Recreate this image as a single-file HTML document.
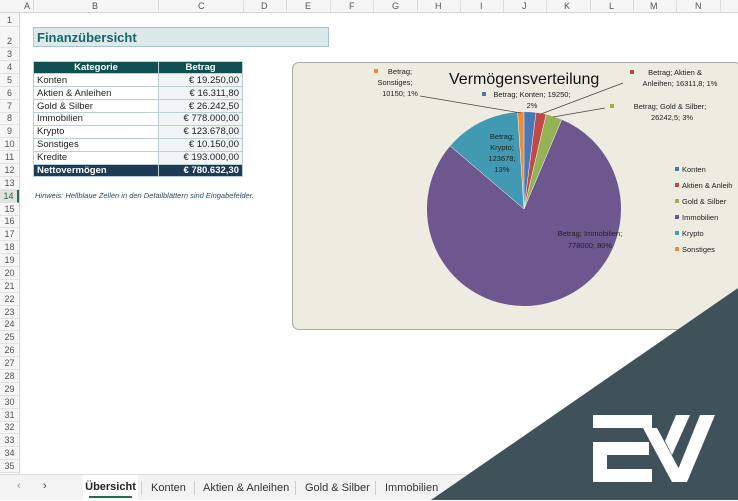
<!DOCTYPE html>
<html><head><meta charset="utf-8"><style>
*{margin:0;padding:0;box-sizing:border-box}
body{width:738px;height:500px;overflow:hidden;background:#fff;font-family:"Liberation Sans",sans-serif;position:relative}
.a{position:absolute}
#colh{left:0;top:0;width:738px;height:13px;background:#f6f6f6;border-bottom:1px solid #d4d4d4;font-size:9px;color:#555}
#colh span{position:absolute;top:1px}
#rowh{left:0;top:13px;width:20px;height:461px;background:#f6f6f6;border-right:1px solid #d4d4d4;font-size:9px;color:#555}
#rowh div{position:absolute;left:0;width:19px;text-align:center;border-bottom:1px solid #e2e2e2}
.vl{position:absolute;top:0;width:1px;height:13px;background:#ddd}
table{border-collapse:collapse;font-size:9.5px;color:#222}
td{border:1px solid #bcd0d4;height:12.875px;padding:0 3px;line-height:11px}
</style></head><body>
<div class="a" id="colh">
<span style="left:24px">A</span><span style="left:92px">B</span><span style="left:198px">C</span><span style="left:261px">D</span><span style="left:305px">E</span><span style="left:349px">F</span><span style="left:392px">G</span><span style="left:435px">H</span><span style="left:480px">I</span><span style="left:522px">J</span><span style="left:564px">K</span><span style="left:609px">L</span><span style="left:650px">M</span><span style="left:695px">N</span>
<i class="vl" style="left:33px"></i><i class="vl" style="left:158px"></i><i class="vl" style="left:243px"></i><i class="vl" style="left:286px"></i><i class="vl" style="left:330px"></i><i class="vl" style="left:373px"></i><i class="vl" style="left:417px"></i><i class="vl" style="left:460px"></i><i class="vl" style="left:503px"></i><i class="vl" style="left:546px"></i><i class="vl" style="left:590px"></i><i class="vl" style="left:633px"></i><i class="vl" style="left:676px"></i><i class="vl" style="left:720px"></i>
</div>
<div class="a" id="rowh">
<div style="top:0;height:14px;line-height:14px">1</div>
<div style="top:14px;height:21px;line-height:28px">2</div>
<div style="top:35px;height:13px;line-height:13px">3</div>
<div style="top:47.9px;height:13px;line-height:13px">4</div>
<div style="top:60.8px;height:13px;line-height:13px">5</div>
<div style="top:73.6px;height:13px;line-height:13px">6</div>
<div style="top:86.5px;height:13px;line-height:13px">7</div>
<div style="top:99.4px;height:13px;line-height:13px">8</div>
<div style="top:112.3px;height:13px;line-height:13px">9</div>
<div style="top:125.1px;height:13px;line-height:13px">10</div>
<div style="top:138px;height:13px;line-height:13px">11</div>
<div style="top:150.9px;height:13px;line-height:13px">12</div>
<div style="top:163.8px;height:13px;line-height:13px">13</div>
<div style="top:176.6px;height:13px;line-height:13px;background:#e1e1e1;color:#1e6b3c;border-right:2px solid #1e7145">14</div>
<div style="top:189.5px;height:13px;line-height:13px">15</div>
<div style="top:202.4px;height:13px;line-height:13px">16</div>
<div style="top:215.3px;height:13px;line-height:13px">17</div>
<div style="top:228.1px;height:13px;line-height:13px">18</div>
<div style="top:241px;height:13px;line-height:13px">19</div>
<div style="top:253.9px;height:13px;line-height:13px">20</div>
<div style="top:266.8px;height:13px;line-height:13px">21</div>
<div style="top:279.6px;height:13px;line-height:13px">22</div>
<div style="top:292.5px;height:13px;line-height:13px">23</div>
<div style="top:305.4px;height:13px;line-height:13px">24</div>
<div style="top:318.3px;height:13px;line-height:13px">25</div>
<div style="top:331.1px;height:13px;line-height:13px">26</div>
<div style="top:344px;height:13px;line-height:13px">27</div>
<div style="top:356.9px;height:13px;line-height:13px">28</div>
<div style="top:369.8px;height:13px;line-height:13px">29</div>
<div style="top:382.6px;height:13px;line-height:13px">30</div>
<div style="top:395.5px;height:13px;line-height:13px">31</div>
<div style="top:408.4px;height:13px;line-height:13px">32</div>
<div style="top:421.3px;height:13px;line-height:13px">33</div>
<div style="top:434.1px;height:13px;line-height:13px">34</div>
<div style="top:447px;height:13px;line-height:13px">35</div>
</div>

<div class="a" style="left:33px;top:27px;width:296px;height:20px;background:#dbe9eb;border:1px solid #a9c4c8;color:#17656b;font-weight:bold;font-size:13px;line-height:19px;padding-left:3px">Finanzübersicht</div>

<table class="a" style="left:33px;top:60.5px;width:210px">
<tr style="background:#0f4f52;color:#fff;font-weight:bold"><td style="width:125px;text-align:center">Kategorie</td><td style="text-align:center">Betrag</td></tr>
<tr><td>Konten</td><td style="text-align:right;background:#f2f5f6">€ 19.250,00</td></tr>
<tr><td>Aktien &amp; Anleihen</td><td style="text-align:right;background:#f2f5f6">€ 16.311,80</td></tr>
<tr><td>Gold &amp; Silber</td><td style="text-align:right;background:#f2f5f6">€ 26.242,50</td></tr>
<tr><td>Immobilien</td><td style="text-align:right;background:#f2f5f6">€ 778.000,00</td></tr>
<tr><td>Krypto</td><td style="text-align:right;background:#f2f5f6">€ 123.678,00</td></tr>
<tr><td>Sonstiges</td><td style="text-align:right;background:#f2f5f6">€ 10.150,00</td></tr>
<tr><td>Kredite</td><td style="text-align:right;background:#f2f5f6">€ 193.000,00</td></tr>
<tr style="background:#1d3b56;color:#fff;font-weight:bold"><td>Nettovermögen</td><td style="text-align:right">€ 780.632,30</td></tr>
</table>
<div class="a" style="left:35px;top:191px;font-size:7.5px;font-style:italic;color:#2c4a66">Hinweis: Hellblaue Zellen in den Detailblättern sind Eingabefelder.</div>

<div class="a" style="left:292px;top:62px;width:450px;height:268px;background:#eeebe1;border:1px solid #a9a9a9;border-radius:7px"></div>
<svg class="a" style="left:0;top:0" width="738" height="500" font-family="Liberation Sans, sans-serif">
<path d="M524,209 L524,112 A97,97 0 0 1 536,112.7Z" fill="#4b78b4"/>
<path d="M524,209 L536,112.7 A97,97 0 0 1 546.1,114.5Z" fill="#be4b48"/>
<path d="M524,209 L546.1,114.5 A97,97 0 0 1 561.7,119.6Z" fill="#93b356"/>
<path d="M524,209 L561.7,119.6 A97,97 0 1 1 450.2,146Z" fill="#6e568e"/>
<path d="M524,209 L450.2,146 A97,97 0 0 1 517.6,112.2Z" fill="#4199b2"/>
<path d="M524,209 L517.6,112.2 A97,97 0 0 1 524,112Z" fill="#ef8a3a"/>
<g stroke="#fff" stroke-width="0.5" fill="none"><path d="M524,209L524,112M524,209L536,112.7M524,209L546.1,114.5M524,209L561.7,119.6M524,209L450.2,146M524,209L517.6,112.2"/></g>
<g stroke="#444" stroke-width="0.7"><line x1="420" y1="96" x2="521" y2="113"/><line x1="623" y1="83" x2="541" y2="114"/><line x1="605" y1="108" x2="553" y2="117"/></g>
<text x="449" y="84" font-size="16" fill="#111">Vermögensverteilung</text>
<g font-size="7.5" fill="#222" text-anchor="middle">
<rect x="374" y="69" width="4" height="4" fill="#ef8a3a"/>
<text x="400" y="74">Betrag;</text><text x="395" y="85">Sonstiges;</text><text x="400" y="96">10150; 1%</text>
<rect x="482" y="92" width="4" height="4" fill="#4b78b4"/>
<text x="532" y="97">Betrag; Konten; 19250;</text><text x="532" y="108">2%</text>
<rect x="630" y="70" width="4" height="4" fill="#be4b48"/>
<text x="675" y="75">Betrag; Aktien &amp;</text><text x="680" y="86">Anleihen; 16311,8; 1%</text>
<rect x="610" y="104" width="4" height="4" fill="#93b356"/>
<text x="670" y="109">Betrag; Gold &amp; Silber;</text><text x="672" y="120">26242,5; 3%</text>
<text x="502" y="139">Betrag;</text><text x="502" y="150">Krypto;</text><text x="502" y="161">123678;</text><text x="502" y="172">13%</text>
<text x="590" y="236">Betrag; Immobilien;</text><text x="590" y="248">778000; 80%</text>
</g>
<g font-size="7.5" fill="#222">
<rect x="675" y="167" width="4" height="4" fill="#4b78b4"/><text x="682" y="172">Konten</text>
<rect x="675" y="183" width="4" height="4" fill="#be4b48"/><text x="682" y="188">Aktien &amp; Anleih</text>
<rect x="675" y="199" width="4" height="4" fill="#93b356"/><text x="682" y="204">Gold &amp; Silber</text>
<rect x="675" y="215" width="4" height="4" fill="#6e568e"/><text x="682" y="220">Immobilien</text>
<rect x="675" y="231" width="4" height="4" fill="#4199b2"/><text x="682" y="236">Krypto</text>
<rect x="675" y="247" width="4" height="4" fill="#ef8a3a"/><text x="682" y="252">Sonstiges</text>
</g>
</svg>

<div class="a" style="left:0;top:474px;width:738px;height:26px;background:#f3f3f3;border-top:1px solid #ddd;font-size:11px;color:#333">
<span class="a" style="left:17px;top:5px;color:#999">‹</span><span class="a" style="left:43px;top:5px">›</span>
<div class="a" style="left:83px;top:0;width:55px;height:26px;background:#fff;text-align:center;line-height:24px;font-weight:bold;color:#222">Übersicht<div style="position:absolute;left:6px;right:6px;bottom:3px;height:2px;background:#1e7145"></div></div>
<span class="a" style="left:151px;top:7px">Konten</span>
<span class="a" style="left:203px;top:7px">Aktien &amp; Anleihen</span>
<span class="a" style="left:305px;top:7px">Gold &amp; Silber</span>
<span class="a" style="left:385px;top:7px">Immobilien</span>
<i class="a" style="left:141px;top:6px;width:1px;height:14px;background:#ccc"></i>
<i class="a" style="left:194px;top:6px;width:1px;height:14px;background:#ccc"></i>
<i class="a" style="left:295px;top:6px;width:1px;height:14px;background:#ccc"></i>
<i class="a" style="left:375px;top:6px;width:1px;height:14px;background:#ccc"></i>
</div>

<svg class="a" style="left:0;top:0" width="738" height="500">
<polygon points="738,288 738,500 431,500" fill="#3f5259"/>
<g fill="#fff">
<rect x="593" y="415" width="59" height="13"/>
<rect x="593" y="442" width="56" height="13"/>
<rect x="593" y="442" width="14" height="40"/>
<rect x="593" y="469" width="59" height="13"/>
<polygon points="643,428 657,428 686,482 672,482"/>
<polygon points="700,415 715,415 687,482 673,482"/>
<polygon points="676,415 690,415 672,455 665,441"/>
</g>
</svg>
</body></html>
